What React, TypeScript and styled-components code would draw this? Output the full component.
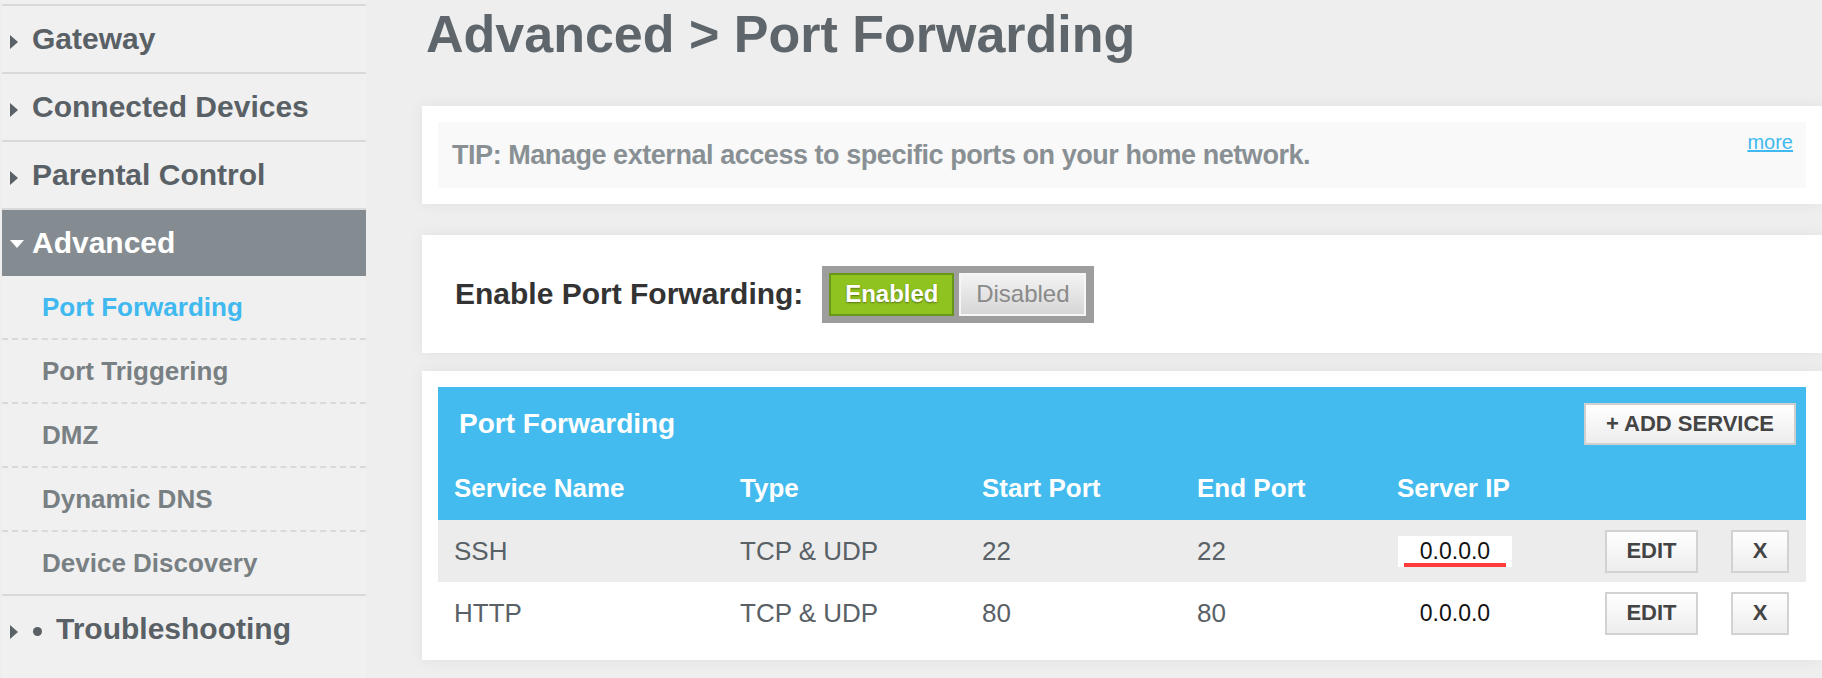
import React from "react";
import styled, { createGlobalStyle } from "styled-components";

interface Service {
  name: string;
  type: string;
  startPort: number;
  endPort: number;
  serverIp: string;
  invalid?: boolean;
}

const services: Service[] = [
  { name: "SSH", type: "TCP & UDP", startPort: 22, endPort: 22, serverIp: "0.0.0.0", invalid: true },
  { name: "HTTP", type: "TCP & UDP", startPort: 80, endPort: 80, serverIp: "0.0.0.0" },
];

const subItems = ["Port Forwarding", "Port Triggering", "DMZ", "Dynamic DNS", "Device Discovery"];

const App: React.FC = () => {
  return (
    <>
      <GlobalStyle />
      <Page>
        <Sidebar>
          <NavItem>
            <CaretBox>
              <Caret />
            </CaretBox>
            Gateway
          </NavItem>
          <NavItem>
            <CaretBox>
              <Caret />
            </CaretBox>
            Connected Devices
          </NavItem>
          <NavItem>
            <CaretBox>
              <Caret />
            </CaretBox>
            Parental Control
          </NavItem>
          <NavItem $open>
            <CaretBox>
              <Caret $down />
            </CaretBox>
            Advanced
          </NavItem>
          {subItems.map((item, i) => (
            <SubItem key={item} $active={i === 0} $last={i === subItems.length - 1}>
              {item}
            </SubItem>
          ))}
          <NavItem $plain>
            <CaretBox $narrow>
              <Caret />
            </CaretBox>
            <Dot />
            Troubleshooting
          </NavItem>
        </Sidebar>

        <Main>
          <Title>Advanced &gt; Port Forwarding</Title>

          <Card>
            <TipBox>
              <TipText>TIP: Manage external access to specific ports on your home network.</TipText>
              <MoreLink href="#">more</MoreLink>
            </TipBox>
          </Card>

          <EnableCard>
            <EnableLabel>Enable Port Forwarding:</EnableLabel>
            <ToggleGroup>
              <ToggleButton $on>Enabled</ToggleButton>
              <ToggleButton>Disabled</ToggleButton>
            </ToggleGroup>
          </EnableCard>

          <TableCard>
            <TableHead>
              <TableTitleBar>
                <TableTitle>Port Forwarding</TableTitle>
                <AddButton>+ ADD SERVICE</AddButton>
              </TableTitleBar>
              <HeaderRow>
                <span>Service Name</span>
                <span>Type</span>
                <span>Start Port</span>
                <span>End Port</span>
                <span>Server IP</span>
                <span />
              </HeaderRow>
            </TableHead>
            {services.map((s, i) => (
              <BodyRow key={s.name} $shaded={i % 2 === 0}>
                <span>{s.name}</span>
                <span>{s.type}</span>
                <span>{s.startPort}</span>
                <span>{s.endPort}</span>
                <IpCell $invalid={s.invalid}>
                  <IpValue $invalid={s.invalid}>{s.serverIp}</IpValue>
                </IpCell>
                <Actions>
                  <RowButton $wide>EDIT</RowButton>
                  <RowButton>X</RowButton>
                </Actions>
              </BodyRow>
            ))}
          </TableCard>
        </Main>
      </Page>
    </>
  );
};

const GlobalStyle = createGlobalStyle`
  html, body {
    margin: 0;
    padding: 0;
  }
  body {
    background: #eeeeee;
    font-family: "Liberation Sans", Arial, Helvetica, sans-serif;
  }
`;

const Page = styled.div`
  display: flex;
  width: 1822px;
  height: 678px;
  overflow: hidden;
  background: #eeeeee;
`;

const Sidebar = styled.nav`
  flex-shrink: 0;
  width: 364px;
  margin-left: 2px;
  padding-top: 4px;
  background: #f0f0f0;
`;

const NavItem = styled.div<{ $open?: boolean; $plain?: boolean }>`
  display: flex;
  align-items: center;
  height: 66px;
  padding-left: 8px;
  border-top: ${(p) => (p.$plain ? "none" : "2px solid #d9d9d9")};
  background: ${(p) => (p.$open ? "#858c91" : "transparent")};
  color: ${(p) => (p.$open ? "#ffffff" : "#596166")};
  font-size: 30px;
  font-weight: 700;
  white-space: nowrap;
`;

const CaretBox = styled.span<{ $narrow?: boolean }>`
  display: flex;
  align-items: center;
  width: ${(p) => (p.$narrow ? "18px" : "22px")};
  height: 100%;
  padding-top: 5px;
  box-sizing: border-box;
`;

const Caret = styled.span<{ $down?: boolean }>`
  width: 0;
  height: 0;
  border-style: solid;
  border-color: transparent;
  ${(p) =>
    p.$down
      ? `
    margin-top: -4px;
    border-width: 8px 7px 0 7px;
    border-top-color: #ffffff;
  `
      : `
    border-width: 7px 0 7px 8px;
    border-left-color: #596166;
  `}
`;

const Dot = styled.span`
  width: 9px;
  height: 9px;
  margin: 4px 14px 0 5px;
  border-radius: 50%;
  background: #596166;
`;

const SubItem = styled.div<{ $active?: boolean; $last?: boolean }>`
  display: flex;
  align-items: center;
  height: 62px;
  padding-left: 40px;
  border-bottom: 2px ${(p) => (p.$last ? "solid" : "dashed")} #d9d9d9;
  color: ${(p) => (p.$active ? "#3fb9ef" : "#798083")};
  font-size: 26px;
  font-weight: 700;
`;

const Main = styled.main`
  flex: 1;
  display: flex;
  flex-direction: column;
  padding-left: 56px;
`;

const Title = styled.h1`
  margin: 4px 0 0 4px;
  color: #5e666b;
  font-size: 52px;
  line-height: 60px;
  font-weight: 700;
`;

const Card = styled.section`
  margin-top: 42px;
  padding: 16px;
  background: #ffffff;
  box-shadow: 0 0 14px rgba(0, 0, 0, 0.06);
`;

const TipBox = styled.div`
  display: flex;
  justify-content: space-between;
  height: 66px;
  padding: 0 13px 0 14px;
  background: #f9f9f9;
`;

const TipText = styled.p`
  align-self: center;
  margin: 0;
  color: #899094;
  font-size: 27px;
  font-weight: 700;
  letter-spacing: -0.45px;
`;

const MoreLink = styled.a`
  margin-top: 8px;
  color: #3fb9ef;
  font-size: 20px;
  line-height: 24px;
  text-decoration: underline;
`;

const EnableCard = styled.section`
  display: flex;
  align-items: center;
  gap: 19px;
  height: 118px;
  margin-top: 31px;
  padding-left: 33px;
  background: #ffffff;
  box-shadow: 0 0 14px rgba(0, 0, 0, 0.06);
`;

const EnableLabel = styled.span`
  color: #333333;
  font-size: 30px;
  font-weight: 700;
`;

const ToggleGroup = styled.div`
  display: flex;
  gap: 5px;
  padding: 7px 8px 7px 7px;
  background: #9d9d9d;
`;

const ToggleButton = styled.button<{ $on?: boolean }>`
  width: ${(p) => (p.$on ? "125px" : "127px")};
  height: 43px;
  padding: 0;
  border: 2px solid ${(p) => (p.$on ? "#67961a" : "#f6f6f6")};
  background: ${(p) => (p.$on ? "#8fc31f" : "linear-gradient(#f3f3f3, #d6d6d6)")};
  color: ${(p) => (p.$on ? "#ffffff" : "#8a8a8a")};
  font-family: inherit;
  font-size: 24px;
  font-weight: ${(p) => (p.$on ? 700 : 400)};
  text-shadow: ${(p) => (p.$on ? "0 1px 2px rgba(0, 0, 0, 0.4)" : "none")};
`;

const TableCard = styled.section`
  margin-top: 18px;
  padding: 16px;
  background: #ffffff;
  box-shadow: 0 0 14px rgba(0, 0, 0, 0.06);
`;

const TableHead = styled.div`
  padding-top: 16px;
  background: #44bbee;
  color: #ffffff;
`;

const TableTitleBar = styled.div`
  display: flex;
  align-items: center;
  justify-content: space-between;
  padding: 0 10px 0 21px;
`;

const TableTitle = styled.h2`
  margin: 0;
  font-size: 28px;
  font-weight: 700;
`;

const AddButton = styled.button`
  width: 212px;
  height: 42px;
  padding: 0;
  border: 2px solid #cfcfcf;
  background: linear-gradient(#ffffff, #ececec);
  color: #444444;
  font-family: inherit;
  font-size: 22px;
  font-weight: 700;
`;

const rowGrid = `
  display: grid;
  grid-template-columns: 286px 242px 215px 200px 1fr auto;
  align-items: center;
  padding: 0 17px 0 16px;
`;

const HeaderRow = styled.div`
  ${rowGrid}
  height: 63px;
  margin-top: 12px;
  font-size: 26px;
  font-weight: 700;
`;

const BodyRow = styled.div<{ $shaded?: boolean }>`
  ${rowGrid}
  height: 62px;
  background: ${(p) => (p.$shaded ? "#ececec" : "#ffffff")};
  color: #596166;
  font-size: 26px;
`;

const IpCell = styled.span<{ $invalid?: boolean }>`
  display: flex;
  justify-content: center;
  width: 114px;
  margin-left: 1px;
  padding: 0 6px;
  box-sizing: border-box;
  background: ${(p) => (p.$invalid ? "#ffffff" : "transparent")};
`;

const IpValue = styled.span<{ $invalid?: boolean }>`
  flex: 1;
  padding-top: 3px;
  text-align: center;
  color: #111111;
  font-size: 23px;
  line-height: 24px;
  border-bottom: 4px solid ${(p) => (p.$invalid ? "#ff3b3b" : "transparent")};
`;

const Actions = styled.div`
  display: flex;
  gap: 33px;
`;

const RowButton = styled.button<{ $wide?: boolean }>`
  width: ${(p) => (p.$wide ? "93px" : "58px")};
  height: 43px;
  padding: 0;
  border: 2px solid #d2d2d2;
  background: linear-gradient(#ffffff, #ededed);
  color: #444444;
  font-family: inherit;
  font-size: 22px;
  font-weight: 700;
`;

export default App;
